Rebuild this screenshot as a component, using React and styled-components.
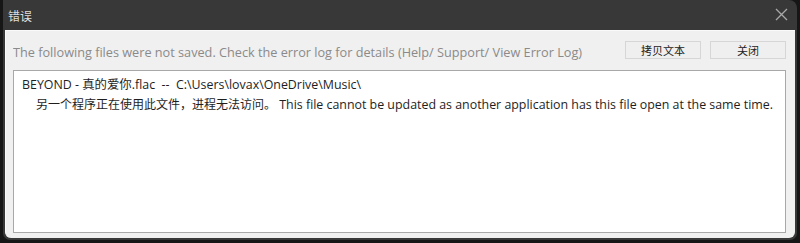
import React from "react";
import styled, { createGlobalStyle } from "styled-components";

const GlobalStyle = createGlobalStyle`
  html, body {
    margin: 0;
    padding: 0;
    background: #161616;
  }
  body {
    font-family: "Open Sans", "Noto Sans CJK SC", sans-serif;
  }
`;

const Frame = styled.div`
  margin: 0 3px 0 3px;
  height: 240px;
  background: #383838;
  border-radius: 0 8px 7px 7px;
  padding: 0 2px 2px 2px;
  box-sizing: border-box;
  display: flex;
  flex-direction: column;
`;

const TitleBar = styled.div`
  height: 30px;
  display: flex;
  align-items: center;
  justify-content: space-between;
  padding: 0 6px 0 3px;
  color: #dedede;
  font-size: 12px;
  font-family: "Noto Sans CJK SC", sans-serif;
`;

const CloseBtn = styled.div`
  width: 16px;
  height: 16px;
  display: flex;
  align-items: center;
  justify-content: center;
  margin-top: -2px;
`;

const Body = styled.div`
  flex: 1;
  background: #f0f0f0;
  border-top: 1px solid #fafafa;
  border-left: 1px solid #fafafa;
  border-radius: 0 0 6px 6px;
  display: flex;
  flex-direction: column;
  padding: 10px 9px 5px 7px;
`;

const Header = styled.div`
  display: flex;
  align-items: center;
  height: 20px;
`;

const Message = styled.div`
  flex: 1;
  color: #8a8a8a;
  font-size: 12.7px;
  white-space: nowrap;
  overflow: hidden;
  padding-top: 1px;
`;

const Buttons = styled.div`
  display: flex;
  gap: 9px;
  margin-top: -2px;
`;

const Button = styled.button`
  width: 76px;
  height: 18px;
  padding: 0;
  background: #efefef;
  border: 1px solid #d6d6d6;
  color: #222;
  font-size: 11px;
  font-family: "Noto Sans CJK SC", sans-serif;
  line-height: 16px;
`;

const LogBox = styled.div`
  flex: 1;
  margin-top: 9px;
  background: #fff;
  border: 1px solid #a8a8a8;
  padding: 4px 8px;
`;

const Line = styled.div`
  color: #1e1e1e;
  font-size: 12.4px;
  line-height: 19px;
  white-space: nowrap;
  padding-left: ${(p) => (p.$indent ? "14px" : "0")};
`;

const Cjk = styled.span`
  font-size: 12px;
  font-family: "Noto Sans CJK SC", sans-serif;
`;

export default function App() {
  return (
    <>
      <GlobalStyle />
      <Frame>
        <TitleBar>
          <span>错误</span>
          <CloseBtn>
            <svg width="13" height="13" viewBox="0 0 13 13">
              <path d="M1 1 L12 12 M12 1 L1 12" stroke="#a8a8a8" strokeWidth="1.3" />
            </svg>
          </CloseBtn>
        </TitleBar>
        <Body>
          <Header>
            <Message>
              The following files were not saved. Check the error log for details (Help/ Support/ View Error Log)
            </Message>
            <Buttons>
              <Button>拷贝文本</Button>
              <Button>关闭</Button>
            </Buttons>
          </Header>
          <LogBox>
            <Line>BEYOND - 真的爱你.flac&nbsp; --&nbsp; C:\Users\lovax\OneDrive\Music\</Line>
            <Line $indent>
              <Cjk>另一个程序正在使用此文件，进程无法访问。</Cjk> This file cannot be updated as another application has this file open at the same time.
            </Line>
          </LogBox>
        </Body>
      </Frame>
    </>
  );
}
